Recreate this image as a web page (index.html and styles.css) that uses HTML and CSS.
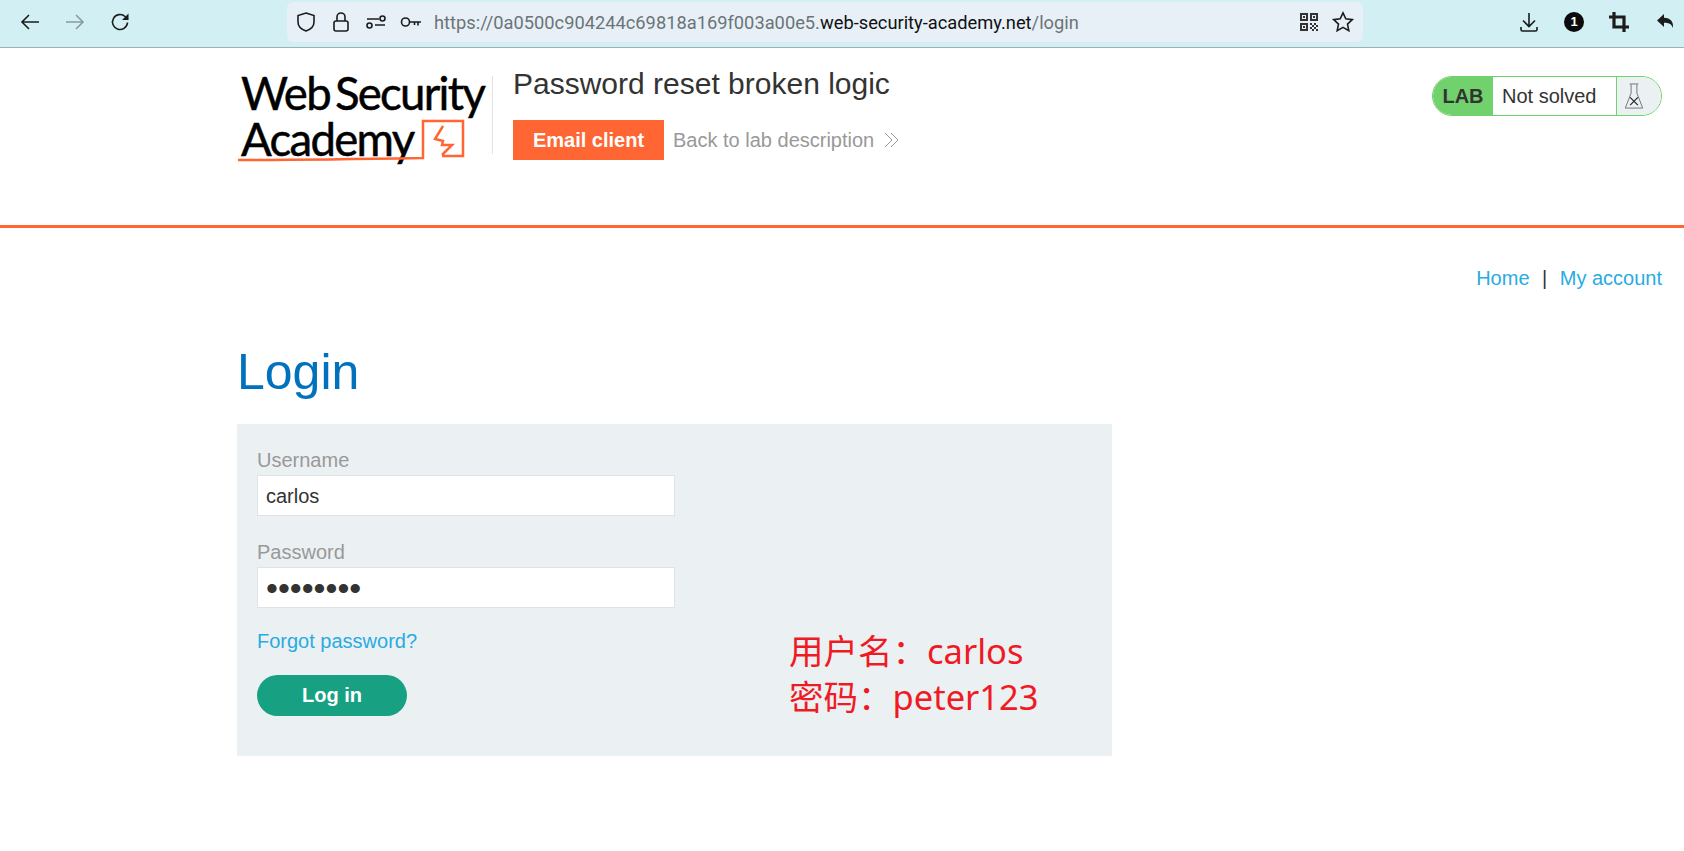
FILE: index.html
```html
<!DOCTYPE html>
<html lang="en">
<head>
    <meta charset="UTF-8">
    <title>Password reset broken logic</title>
    <link rel="stylesheet" href="styles.css">
</head>
<body>
    <div class="browser-bar">
        <div class="nav-icons">
            <svg class="icon" viewBox="0 0 24 24"><path d="M21 12H4M11 5l-7 7 7 7"/></svg>
            <svg class="icon icon-off" viewBox="0 0 24 24"><path d="M3 12h17M13 5l7 7-7 7"/></svg>
            <svg class="icon" viewBox="0 0 24 24"><path d="M19.5 12.5a7.5 7.5 0 1 1-2.4-6L20 9"/><path class="solid" d="M20.5 3.5v6.5H14z"/></svg>
        </div>
        <div class="url-bar">
            <svg class="icon" viewBox="0 0 24 24"><path d="M12 3l8 2.5V12c0 4.5-3.5 7.5-8 9-4.5-1.5-8-4.5-8-9V5.500z"/></svg>
            <svg class="icon" viewBox="0 0 24 24"><rect x="5" y="11" width="14" height="10" rx="2"/><path d="M8 11V7a4 4 0 0 1 8 0v4"/></svg>
            <svg class="icon" viewBox="0 0 24 24"><path d="M3 9h12M11 15h10"/><circle cx="18.5" cy="8.5" r="2.5"/><circle cx="5.5" cy="15.5" r="2.5"/></svg>
            <svg class="icon" viewBox="0 0 24 24"><circle cx="6.5" cy="12" r="4"/><path d="M10.5 12H22M19 12v3.500M15.500 12v3"/></svg>
            <span class="url-text">https://0a0500c904244c69818a169f003a00e5.<b>web-security-academy.net</b>/login</span>
            <svg class="qr" viewBox="0 0 18 18"><path d="M0 0h8v8H0zM2 2v4h4V2zM10 0h8v8h-8zM12 2v4h4V2zM0 10h8v8H0zM2 12v4h4v-4zM3 3h2v2H3zM13 3h2v2h-2zM3 13h2v2H3zM10 10h2v2h-2zM14 10h2v2h-2zM12 12h2v2h-2zM16 12h2v2h-2zM10 14h2v2h-2zM14 14h2v2h-2zM12 16h2v2h-2zM16 16h2v2h-2z"/></svg>
            <svg class="icon star" viewBox="0 0 24 24"><path d="M12 2.800l2.800 6 6.500.8-4.800 4.500 1.300 6.500-5.800-3.300-5.800 3.300 1.300-6.500-4.800-4.500 6.500-.8z"/></svg>
        </div>
        <div class="tool-icons">
            <svg class="icon" viewBox="0 0 24 24"><path d="M12 3v13M6 10.500l6 6 6-6M4 17v2.500a1.500 1.500 0 0 0 1.500 1.500h13a1.500 1.500 0 0 0 1.500-1.500V17"/></svg>
            <span class="count-badge">1</span>
            <svg class="icon icon-heavy" viewBox="0 0 24 24"><path d="M7 2v15h15M2 7h15v15"/></svg>
            <svg class="icon-back" viewBox="0 0 24 24"><path d="M10 4L3 10.500l7 6.500v-4.200c4.500 0 7.200.8 9 5.200.6-6.500-2.500-10-9-10.300z"/></svg>
        </div>
    </div>

    <header class="lab-header">
        <div class="logo">
            <div class="logo-line">Web Security</div>
            <div class="logo-line">Academy</div>
            <svg class="logo-mark" viewBox="0 0 240 50"><path class="logo-stroke" d="M1 44C60 44 130 43 186 42V5H226V40H205M206 10L198 23 206 25 205 29 215 29 205 39"/></svg>
        </div>
        <div class="lab-title">
            <h2>Password reset broken logic</h2>
            <div class="lab-links">
                <a class="btn-email" href="#">Email client</a>
                <a class="back-link" href="#">Back to lab description
                    <svg class="chevrons" viewBox="0 0 16 16"><path d="M1 1l7 7-7 7M7 1l7 7-7 7"/></svg>
                </a>
            </div>
        </div>
        <div class="lab-status">
            <span class="lab-tag">LAB</span>
            <span class="lab-state">Not solved</span>
            <span class="lab-flask">
                <svg viewBox="0 0 20 28"><path class="flask-body" d="M5.500 1h9M7 1.500v9L1 26h18L13 10.500v-9"/><path d="M6 15l8 8M14 15l-8 8"/></svg>
            </span>
        </div>
    </header>

    <main class="page">
        <nav class="top-links">
            <a href="#">Home</a><span class="sep">|</span><a href="#">My account</a>
        </nav>
        <h1>Login</h1>
        <section class="login-panel">
            <form class="login-form">
                <label for="username">Username</label>
                <input id="username" type="text" value="carlos">
                <label for="password">Password</label>
                <input id="password" class="pass" type="password" value="peter123">
                <a class="forgot" href="#">Forgot password?</a>
                <button class="btn-login" type="button">Log in</button>
            </form>
            <div class="note">用户名：carlos<br>密码：peter123</div>
        </section>
    </main>
</body>
</html>
```

FILE: styles.css
```css
* {
    box-sizing: border-box;
}
body {
    margin: 0;
    background: #fff;
    color: #333332;
    font-family: "Liberation Sans", Arial, sans-serif;
    font-size: 20px;
    overflow: hidden;
}
a {
    text-decoration: none;
}

/* browser chrome */
.browser-bar {
    display: flex;
    align-items: center;
    height: 48px;
    padding-bottom: 3px;
    background: #d2eff3;
    border-bottom: 1px solid #9fb1b7;
}
.icon {
    width: 24px;
    height: 24px;
    flex: none;
    fill: none;
    stroke: #1c1c1c;
    stroke-width: 1.6;
}
.icon .solid {
    fill: #1c1c1c;
    stroke: none;
}
.icon-off {
    stroke: #8a9a9e;
}
.icon-heavy {
    stroke-width: 3.2;
}
.icon-back {
    width: 24px;
    height: 24px;
    fill: #1c1c1c;
}
.nav-icons {
    display: flex;
    gap: 21px;
    width: 287px;
    padding-left: 18px;
}
.url-bar {
    display: flex;
    align-items: center;
    width: 1076px;
    height: 40px;
    padding: 0 8px 0 7px;
    gap: 11px;
    background: #e8f0f7;
    border-radius: 6px;
}
.url-text {
    flex: 1;
    color: #6b7478;
    font-family: "Roboto", "Liberation Sans", sans-serif;
    font-size: 18.3px;
    white-space: nowrap;
}
.url-text b {
    color: #111;
    font-weight: 400;
}
.qr {
    width: 18px;
    height: 18px;
    margin-right: 2px;
    fill: #333;
}
.tool-icons {
    display: flex;
    align-items: center;
    gap: 23px;
    margin-left: auto;
    padding-right: 6px;
}
.count-badge {
    width: 20px;
    height: 20px;
    border-radius: 50%;
    background: #0b0b0b;
    color: #fff;
    font-size: 13px;
    font-weight: 700;
    line-height: 20px;
    text-align: center;
}

/* lab header */
.lab-header {
    display: flex;
    align-items: flex-start;
    height: 180px;
    padding: 28px 22px 0 237px;
    border-bottom: 3px solid #ff6633;
}
.logo {
    position: relative;
    width: 256px;
    height: 78px;
    margin-right: 20px;
    padding-left: 4px;
    border-right: 1px solid #e0e3e5;
    color: #000;
    font-family: "Lato", "Liberation Sans", sans-serif;
    font-size: 45.5px;
    letter-spacing: -1.7px;
    word-spacing: -5px;
    line-height: 46px;
    -webkit-text-stroke: 0.5px #000;
    white-space: nowrap;
}
.logo-line:first-child {
    margin-top: -6px;
}
.logo-mark {
    position: absolute;
    left: 0;
    top: 40px;
    width: 240px;
    height: 50px;
}
.logo-stroke {
    fill: none;
    stroke: #ff6633;
    stroke-width: 2.5;
}
.lab-title {
    margin-top: -11px;
}
.lab-title h2 {
    margin: 0 0 17px;
    font-size: 30px;
    font-weight: 400;
    line-height: 38px;
}
.lab-links {
    display: flex;
    align-items: center;
}
.btn-email {
    width: 151px;
    height: 40px;
    background: #ff6633;
    color: #fff;
    font-weight: 700;
    line-height: 40px;
    text-align: center;
}
.back-link {
    display: flex;
    align-items: center;
    gap: 10px;
    margin-left: 9px;
    color: #999;
}
.chevrons {
    width: 16px;
    height: 16px;
    fill: none;
    stroke: #999;
    stroke-width: 1;
}
.lab-status {
    display: flex;
    width: 230px;
    height: 40px;
    margin-left: auto;
    border: 1px solid #70d16d;
    border-radius: 20px;
    overflow: hidden;
}
.lab-tag {
    width: 60px;
    background: #70d16d;
    font-weight: 700;
    line-height: 38px;
    text-align: center;
}
.lab-state {
    width: 124px;
    padding-left: 9px;
    line-height: 38px;
    border-right: 1px solid #70d16d;
}
.lab-flask {
    flex: 1;
    padding: 6px 0 0 7px;
    background: #ebf0f2;
}
.lab-flask svg {
    display: block;
    width: 20px;
    height: 27px;
    fill: none;
    stroke: #222;
    stroke-width: 1.2;
}
.lab-flask .flask-body {
    stroke: #555;
    stroke-width: 0.8;
}

/* page content */
.page {
    padding: 0 22px 0 237px;
}
.top-links {
    display: flex;
    justify-content: flex-end;
    margin-top: 38px;
    line-height: 24px;
}
.top-links a {
    color: #29abe2;
}
.sep {
    margin: 0 12.5px;
}
.page h1 {
    margin: 52px 0 0;
    color: #0071bc;
    font-size: 50px;
    font-weight: 400;
    line-height: 60px;
}
.login-panel {
    position: relative;
    width: 875px;
    height: 332px;
    margin-top: 22px;
    padding: 22px 20px 0;
    background: #ebf0f3;
}
.login-form {
    display: flex;
    flex-direction: column;
    align-items: flex-start;
}
.login-form label {
    color: #999;
    line-height: 29px;
}
.login-form input {
    width: 418px;
    height: 41px;
    margin-bottom: 22px;
    padding: 2px 8px 0;
    border: 1px solid #e0e3e5;
    background: #fff;
    color: #333332;
    font-family: "Liberation Sans", Arial, sans-serif;
    font-size: 20px;
}
.login-form .pass {
    font-size: 34px;
}
.forgot {
    margin-top: -1px;
    color: #29abe2;
    line-height: 24px;
}
.btn-login {
    width: 150px;
    height: 41px;
    margin-top: 22px;
    border: 0;
    border-radius: 21px;
    background: #18a083;
    color: #fff;
    font-family: "Liberation Sans", Arial, sans-serif;
    font-size: 20px;
    font-weight: 700;
}
/* red note typed over the screenshot */
.note {
    position: absolute;
    left: 552px;
    top: 204px;
    color: #f01a24;
    font-family: "Noto Sans", "Noto Sans CJK SC", sans-serif;
    font-size: 34.5px;
    line-height: 46px;
}
```
